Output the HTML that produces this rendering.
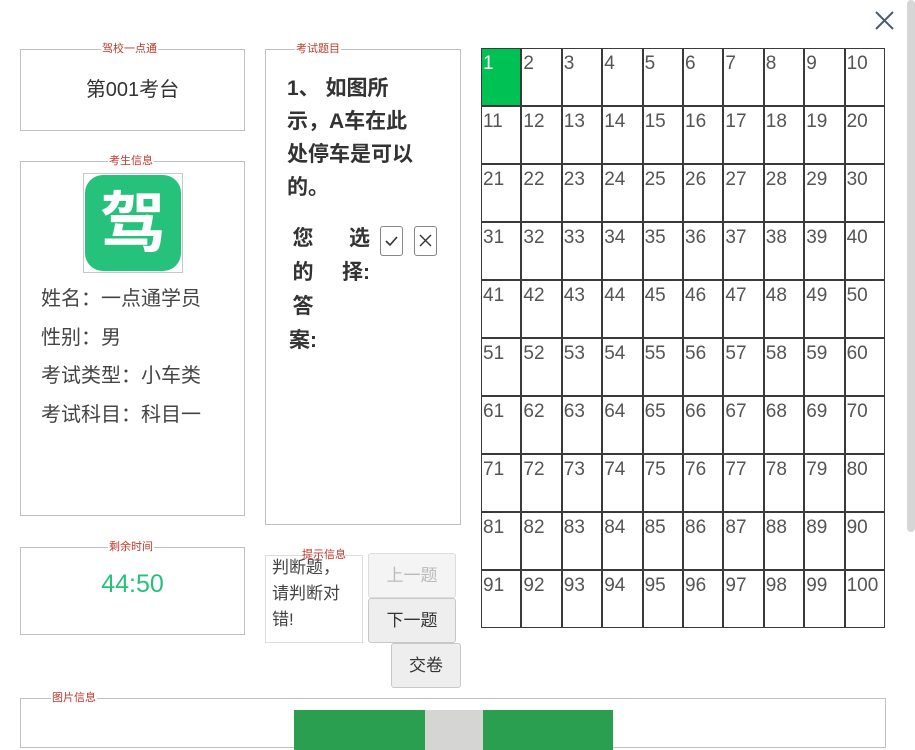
<!DOCTYPE html>
<html><head><meta charset="utf-8"><style>
body{margin:0;width:915px;height:735px;overflow:hidden;background:#fff;font-family:"Liberation Sans","Noto Sans CJK SC",sans-serif;color:#444;position:relative}
.fs{position:absolute;border:1px solid #c0c0c0;box-sizing:border-box}
.lg{position:absolute;top:-9px;font-size:11px;color:#c0392b;background:#fff;line-height:16px;padding:0 1px;white-space:nowrap}
.grid{position:absolute;left:481px;top:48px;width:404px;height:580px;display:grid;grid-template-columns:repeat(10,1fr);grid-template-rows:repeat(10,58px)}
.grid div{border:1px solid #3a3a3a;box-sizing:border-box;font-size:19px;color:#555;padding:5px 0 0 1px;line-height:20px}
.grid div.on{background:#00c153;color:#fff}
.btn{position:absolute;border:1px solid #c8c8c8;border-radius:3px;background:#eee;box-sizing:border-box;font-size:17px;text-align:center;color:#333}
</style></head><body>
<svg style="position:absolute;left:875px;top:11px" width="19" height="19"><path d="M1 1L18 18M18 1L1 18" stroke="#4a5a6a" stroke-width="2"/></svg>
<div style="position:absolute;left:907px;top:0;width:8px;height:532px;background:#d6d6d6;border-radius:4px"></div>

<div class="fs" style="left:20px;top:49px;width:225px;height:82px"><span class="lg" style="left:80px">驾校一点通</span>
<div style="text-align:center;margin-top:23px;font-size:20px;color:#333">第001考台</div></div>

<div class="fs" style="left:20px;top:161px;width:225px;height:355px"><span class="lg" style="left:87px">考生信息</span>
<div style="position:absolute;left:62px;top:11px;width:100px;height:100px;border:1px solid #c8c8c8;box-sizing:border-box">
<div style="position:absolute;left:1px;top:1px;width:96px;height:96px;background:#26c27c;border-radius:18px;color:#fff;font-size:66px;font-weight:bold;text-align:center;line-height:96px">驾</div></div>
<div style="position:absolute;left:20px;top:118px;font-size:20px;line-height:38.5px;color:#444">姓名：一点通学员<br>性别：男<br>考试类型：小车类<br>考试科目：科目一</div></div>

<div class="fs" style="left:265px;top:49px;width:196px;height:476px"><span class="lg" style="left:29px">考试题目</span>
<div style="position:absolute;left:21px;top:22px;width:134px;font-size:21px;font-weight:bold;line-height:33px;color:#333">1、 如图所示，A车在此处停车是可以的。</div>
<div style="position:absolute;left:22px;top:172px;width:30px;font-size:21px;font-weight:bold;line-height:34px;color:#333;text-align:center">您的答案:</div>
<div style="position:absolute;left:70px;top:172px;width:34px;font-size:21px;font-weight:bold;line-height:34px;color:#333;text-align:right">选择:</div>
<div style="position:absolute;left:114px;top:176px;width:23px;height:30px;border:1px solid #888;border-radius:3px;box-sizing:border-box"><svg width="21" height="28"><path d="M5 14L9 18L16 10" stroke="#333" stroke-width="1.6" fill="none"/></svg></div>
<div style="position:absolute;left:148px;top:176px;width:23px;height:30px;border:1px solid #888;border-radius:3px;box-sizing:border-box"><svg width="21" height="28"><path d="M5 8L16 19M16 8L5 19" stroke="#333" stroke-width="1.4"/></svg></div>
</div>

<div class="fs" style="left:20px;top:547px;width:225px;height:88px"><span class="lg" style="left:87px">剩余时间</span>
<div style="text-align:center;margin-top:22px;font-size:25px;color:#26c27c">44:50</div></div>

<div class="fs" style="left:265px;top:555px;width:98px;height:88px;border-color:#ddd"><span class="lg" style="left:35px;top:-9px;background:transparent">提示信息</span>
<div style="position:absolute;left:6px;top:-1px;width:80px;font-size:17px;line-height:26px;color:#444">判断题，请判断对错!</div></div>

<div class="btn" style="left:368px;top:553px;width:88px;height:45px;line-height:43px;color:#bbb;background:#f4f4f4;border-color:#ddd">上一题</div>
<div class="btn" style="left:368px;top:598px;width:88px;height:45px;line-height:43px">下一题</div>
<div class="btn" style="left:391px;top:643px;width:70px;height:45px;line-height:43px">交卷</div>

<div class="fs" style="left:20px;top:698px;width:866px;height:50px"><span class="lg" style="left:30px">图片信息</span>
<div style="position:absolute;left:273px;top:11px;width:131px;height:40px;background:#2a9f4f"></div>
<div style="position:absolute;left:404px;top:11px;width:58px;height:40px;background:#d5d5d3"></div>
<div style="position:absolute;left:462px;top:11px;width:130px;height:40px;background:#2a9f4f"></div>
</div>

<div class="grid">
<div class="on">1</div><div>2</div><div>3</div><div>4</div><div>5</div><div>6</div><div>7</div><div>8</div><div>9</div><div>10</div>
<div>11</div><div>12</div><div>13</div><div>14</div><div>15</div><div>16</div><div>17</div><div>18</div><div>19</div><div>20</div>
<div>21</div><div>22</div><div>23</div><div>24</div><div>25</div><div>26</div><div>27</div><div>28</div><div>29</div><div>30</div>
<div>31</div><div>32</div><div>33</div><div>34</div><div>35</div><div>36</div><div>37</div><div>38</div><div>39</div><div>40</div>
<div>41</div><div>42</div><div>43</div><div>44</div><div>45</div><div>46</div><div>47</div><div>48</div><div>49</div><div>50</div>
<div>51</div><div>52</div><div>53</div><div>54</div><div>55</div><div>56</div><div>57</div><div>58</div><div>59</div><div>60</div>
<div>61</div><div>62</div><div>63</div><div>64</div><div>65</div><div>66</div><div>67</div><div>68</div><div>69</div><div>70</div>
<div>71</div><div>72</div><div>73</div><div>74</div><div>75</div><div>76</div><div>77</div><div>78</div><div>79</div><div>80</div>
<div>81</div><div>82</div><div>83</div><div>84</div><div>85</div><div>86</div><div>87</div><div>88</div><div>89</div><div>90</div>
<div>91</div><div>92</div><div>93</div><div>94</div><div>95</div><div>96</div><div>97</div><div>98</div><div>99</div><div>100</div>
</div>
</body></html>
